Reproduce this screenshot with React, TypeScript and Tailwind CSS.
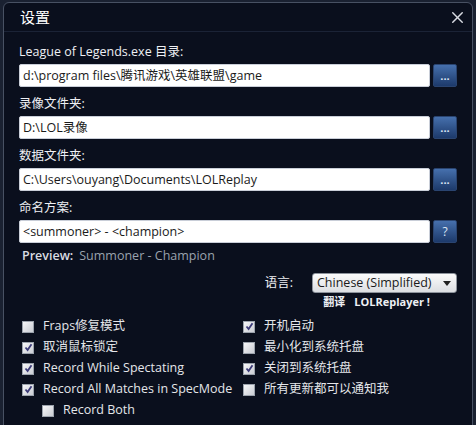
import { X } from 'lucide-react';

const font = { fontFamily: '"Open Sans", "Noto Sans CJK SC", sans-serif' };

function PathRow({ label, value, btn }: { label: string; value: string; btn: string }) {
  return (
    <div className="mb-2">
      <div className="h-[18px] leading-[18px] text-[12.5px] text-[#eef0f4]">{label}</div>
      <div className="mt-[3px] flex items-center gap-[3px]">
        <div className="h-[23px] flex-1 bg-white rounded-[2px] border border-[#c9ced8] px-[3px] text-[12.5px] leading-[21px] text-[#1a1a1a] whitespace-nowrap overflow-hidden">
          {value}
        </div>
        <div className="h-[23px] w-[24px] rounded-[2px] border border-[#2a4470] bg-gradient-to-b from-[#4670ad] to-[#1d3a6b] flex items-center justify-center text-[11px] font-bold text-[#dfe8f6] leading-none">
          {btn}
        </div>
      </div>
    </div>
  );
}

function Check({ checked, label }: { checked: boolean; label: string }) {
  return (
    <div className="h-[21px] flex items-center">
      <div className="w-[12px] h-[12px] ml-[3px] border border-[#9ca3ad] bg-gradient-to-br from-[#f7f7f9] to-[#c9ccd3] flex items-center justify-center">
        {checked && (
          <svg width="9" height="9" viewBox="0 0 9 9">
            <path d="M1.5 4.5 L3.6 7 L7.5 1.2" stroke="#3b3a78" strokeWidth="1.8" fill="none" />
          </svg>
        )}
      </div>
      <span className="ml-[9px] text-[12.5px] text-[#e4e6ea] whitespace-nowrap">{label}</span>
    </div>
  );
}

export default function App() {
  return (
    <div className="w-[476px] h-[425px] bg-[#1a2131] pl-[3px] pr-[3px] pt-[2px] overflow-hidden" style={font}>
      <div className="h-[440px] bg-[#0a0f1d] border border-[#485163] rounded-t-[6px]">
        <div className="h-[29px] flex items-center justify-between pl-[16px] pr-[5px] border-b border-[#1b2336]">
          <span className="text-[15px] text-white">设置</span>
          <X size={19} strokeWidth={1.8} className="text-[#d8dbe2]" />
        </div>
        <div className="px-[15px] pt-[11px]">
          <PathRow label="League of Legends.exe 目录:" value="d:\program files\腾讯游戏\英雄联盟\game" btn="..." />
          <PathRow label="录像文件夹:" value="D:\LOL录像" btn="..." />
          <PathRow label="数据文件夹:" value="C:\Users\ouyang\Documents\LOLReplay" btn="..." />
          <div>
            <div className="h-[18px] leading-[18px] text-[12.5px] text-[#eef0f4]">命名方案:</div>
            <div className="mt-[3px] flex items-center gap-[3px]">
              <div className="h-[23px] flex-1 bg-white rounded-[2px] border border-[#c9ced8] px-[3px] text-[12.5px] leading-[21px] text-[#1a1a1a]">
                {'<summoner> - <champion>'}
              </div>
              <div className="h-[23px] w-[24px] rounded-[2px] border border-[#2a4470] bg-gradient-to-b from-[#4670ad] to-[#1d3a6b] flex items-center justify-center text-[12px] text-[#dfe8f6]">
                ?
              </div>
            </div>
          </div>
          <div className="mt-[4px] h-[18px] leading-[18px] text-[12.5px]">
            <span className="font-semibold text-[#d9dce2] ml-[3px]">Preview:</span>
            <span className="ml-[6px] text-[#9aa3ae]">Summoner - Champion</span>
          </div>
          <div className="mt-[8px] flex justify-end items-center">
            <span className="text-[12.5px] text-[#eef0f4] mr-[19px]">语言:</span>
            <div className="w-[145px] h-[20px] rounded-[3px] border border-[#8d939c] bg-gradient-to-b from-[#fbfbfb] to-[#dcdee2] flex items-center justify-between pl-[4px] pr-[5px]">
              <span className="text-[12.5px] text-[#1a1a1a] leading-none">Chinese (Simplified)</span>
              <svg width="8" height="5" viewBox="0 0 8 5">
                <path d="M0 0 L8 0 L4 5 Z" fill="#222" />
              </svg>
            </div>
          </div>
          <div className="flex justify-end pr-[27px] h-[14px] leading-[14px] mt-[2px]">
            <span className="text-[11px] font-bold text-[#eef0f4]">翻译</span>
            <span className="ml-[9px] text-[11px] font-bold text-[#eef0f4]">LOLReplayer !</span>
          </div>
          <div className="mt-[7px] grid grid-cols-[221px_1fr]">
            <div>
              <Check checked={false} label="Fraps修复模式" />
              <Check checked label="取消鼠标锁定" />
              <Check checked label="Record While Spectating" />
              <Check checked label="Record All Matches in SpecMode" />
              <div className="pl-[20px]">
                <Check checked={false} label="Record Both" />
              </div>
            </div>
            <div>
              <Check checked label="开机启动" />
              <Check checked={false} label="最小化到系统托盘" />
              <Check checked label="关闭到系统托盘" />
              <Check checked={false} label="所有更新都可以通知我" />
            </div>
          </div>
        </div>
      </div>
    </div>
  );
}
